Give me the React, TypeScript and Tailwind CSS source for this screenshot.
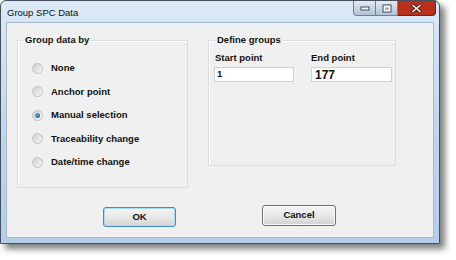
import React from "react";

function Radio({ label, checked }: { label: string; checked?: boolean }) {
  return (
    <label className="flex h-[14px] items-center">
      <span className="ml-[14px] flex h-[11px] w-[11px] items-center justify-center rounded-full border border-[#c2c2c2] bg-gradient-to-br from-[#cdcdcd] to-[#f8f8f8]">
        {checked && (
          <span className="h-[5px] w-[5px] rounded-full bg-gradient-to-br from-[#6cc2e8] to-[#1a5a86]" />
        )}
      </span>
      <span className="ml-[8px] text-[9.5px] font-bold leading-[12px] text-[#111]">
        {label}
      </span>
    </label>
  );
}

function WinButton({ label, primary }: { label: string; primary?: boolean }) {
  return (
    <button
      className={
        primary
          ? "mt-[2px] h-[20px] w-[73px] rounded-[3px] border border-[#3c8fc4] bg-gradient-to-b from-[#f4f4f4] via-[#e8e8e8] to-[#d4d4d4] text-[9.5px] font-bold text-[#111] shadow-[inset_0_0_0_1px_#a9dcf6]"
          : "h-[21px] w-[74px] rounded-[3px] border border-[#707070] bg-gradient-to-b from-[#f4f4f4] via-[#e8e8e8] to-[#d2d2d2] text-[9.5px] font-bold text-[#111] shadow-[inset_0_0_0_1px_#fbfbfb]"
      }
    >
      {label}
    </button>
  );
}

export default function App() {
  return (
    <div className="h-[260px] w-[456px] bg-white font-['Liberation_Sans',Arial,sans-serif]">
      <div className="flex h-[244px] w-[440px] flex-col rounded-t-[6px] border border-[#47505a] bg-gradient-to-b from-[#dce9f7] via-[#c2d7ee] to-[#b3cdea] shadow-[5px_5px_6px_rgba(0,0,0,0.5)]">
        {/* title bar */}
        <div className="flex h-[21px] shrink-0 items-start justify-between">
          <span className="ml-[6px] mt-[6px] text-[9.5px] leading-[12px] text-[#111]">
            Group SPC Data
          </span>
          <div className="mr-[3px] flex">
            <div className="flex h-[15px] w-[23px] items-center justify-center rounded-bl-[4px] border border-t-0 border-[#6f8397] bg-gradient-to-b from-[#e3ebf4] via-[#c9d6e4] to-[#b2c3d6]">
              <svg width="10" height="6" viewBox="0 0 10 6">
                <rect x="1" y="2" width="8" height="3" fill="#fff" stroke="#3c4a5a" strokeWidth="1" />
              </svg>
            </div>
            <div className="flex h-[15px] w-[22px] items-center justify-center border border-l-0 border-t-0 border-[#6f8397] bg-gradient-to-b from-[#e3ebf4] via-[#c9d6e4] to-[#b2c3d6]">
              <svg width="10" height="9" viewBox="0 0 10 9">
                <rect x="1" y="1" width="8" height="7" fill="#fff" stroke="#3c4a5a" strokeWidth="1" />
                <rect x="3" y="3.5" width="4" height="2.5" fill="#9fb2c6" />
              </svg>
            </div>
            <div className="flex h-[15px] w-[38px] items-center justify-center rounded-br-[4px] border border-l-0 border-t-0 border-[#6e2218] bg-[#b8301c]">
              <svg width="11" height="9" viewBox="0 0 11 9">
                <path d="M2 1.5 L9 7.5 M9 1.5 L2 7.5" stroke="#4a1a14" strokeWidth="3" strokeLinecap="square" />
                <path d="M2 1.5 L9 7.5 M9 1.5 L2 7.5" stroke="#fff" strokeWidth="1.5" strokeLinecap="square" />
              </svg>
            </div>
          </div>
        </div>

        {/* client area */}
        <div className="mx-[5px] mb-[5px] flex flex-1 flex-col border border-[#a3bbd4] bg-[#f0f0f0] pl-[10px] pt-[11px]">
          <div className="flex items-start gap-[20px]">
            <fieldset className="h-[154px] w-[171px] border border-[#d5dfe5] shadow-[inset_1px_1px_0_#fff]">
              <legend className="ml-[6px] px-[1px] text-[9.5px] font-bold leading-[12px] text-[#111]">
                Group data by
              </legend>
              <div className="flex flex-col gap-[9.5px] pt-[15px]">
                <Radio label="None" />
                <Radio label="Anchor point" />
                <Radio label="Manual selection" checked />
                <Radio label="Traceability change" />
                <Radio label="Date/time change" />
              </div>
            </fieldset>

            <fieldset className="h-[132px] w-[188px] border border-[#d5dfe5] shadow-[inset_1px_1px_0_#fff]">
              <legend className="ml-[7px] px-[1px] text-[9.5px] font-bold leading-[12px] text-[#111]">
                Define groups
              </legend>
              <div className="mt-[6px] flex gap-[17px] pl-[5px]">
                <div className="flex flex-col">
                  <span className="pl-[1px] text-[9.5px] font-bold leading-[12px] text-[#111]">
                    Start point
                  </span>
                  <div className="mt-[3px] flex h-[15px] w-[80px] items-center border border-[#cdd3d9] bg-white pl-[2px] text-[9.5px] font-bold text-[#111]">
                    1
                  </div>
                </div>
                <div className="flex flex-col">
                  <span className="text-[9.5px] font-bold leading-[12px] text-[#111]">
                    End point
                  </span>
                  <div className="mt-[3px] flex h-[15px] w-[81px] items-center border border-[#cdd3d9] bg-white pl-[3px] text-[12px] font-bold text-[#111]">
                    177
                  </div>
                </div>
              </div>
            </fieldset>
          </div>

          <div className="ml-[86px] mt-[17px] flex items-start gap-[86px]">
            <WinButton label="OK" primary />
            <WinButton label="Cancel" />
          </div>
        </div>
      </div>
    </div>
  );
}
